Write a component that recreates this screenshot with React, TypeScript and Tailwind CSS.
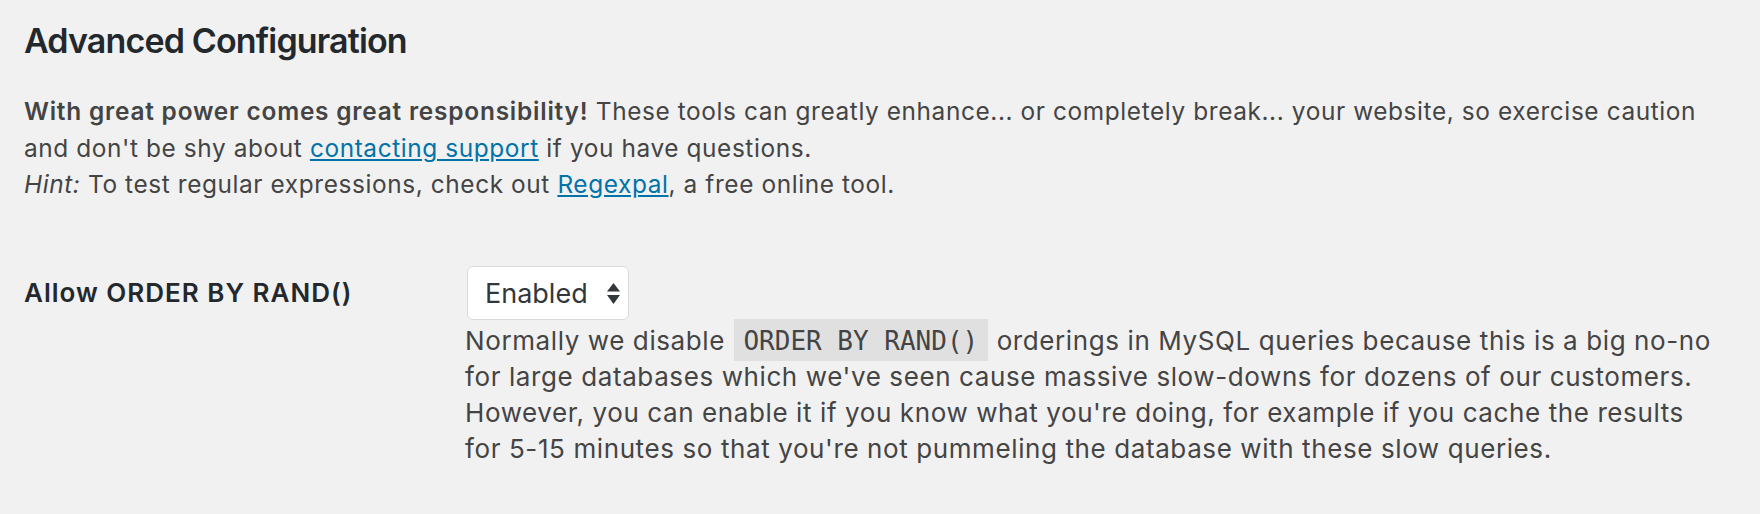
import React from "react"

const sans = "font-['Inter','Noto_Sans',sans-serif]"

function SelectArrows() {
  return (
    <svg width="13" height="21" viewBox="0 0 13 21" className="shrink-0">
      <path d="M0 8.5 L6.5 0 L13 8.5 Z" fill="#32373c" />
      <path d="M0 12 L6.5 21 L13 12 Z" fill="#32373c" />
    </svg>
  )
}

function FakeSelect({ value }: { value: string }) {
  return (
    <div className="ml-[2px] inline-flex h-[54px] w-[162px] items-center justify-between rounded-[6px] border border-[#dadada] bg-white pl-[17px] pr-[8px]">
      <span className="text-[27px] leading-none text-[#32373c]">{value}</span>
      <SelectArrows />
    </div>
  )
}

export default function App() {
  return (
    <div className={`${sans} h-[514px] w-full bg-[#f1f1f1] pl-[24px] pt-[19px] text-[#444]`}>
      <h2 className="text-[34px] font-semibold leading-[1.3] tracking-[-0.85px] text-[#23282d]">
        Advanced Configuration
      </h2>

      {/* intro */}
      <p className="mt-[30px] whitespace-nowrap text-[24.4px] leading-[1.5] tracking-[0.6px]">
        <strong className="font-semibold tracking-[0.8px]">With great power comes great responsibility!</strong>{" "}
        These tools can greatly enhance... or completely break... your website, so exercise caution
        <br />
        and don't be shy about{" "}
        <a href="#" className="text-[#0073aa] underline underline-offset-[2px]">contacting support</a>{" "}
        if you have questions.
        <br />
        <em>Hint:</em> To test regular expressions, check out{" "}
        <a href="#" className="text-[#0073aa] underline underline-offset-[2px]">Regexpal</a>, a free online tool.
      </p>

      <div className="mt-[63px] flex">
        <div className="w-[441px] shrink-0 pt-[10px] text-[26px] font-semibold leading-[1.3] tracking-[1px] text-[#23282d]">
          Allow ORDER BY RAND()
        </div>
        <div className="flex flex-col items-start">
          <FakeSelect value="Enabled" />
          <p className="mt-[3px] whitespace-nowrap text-[26px] leading-[36px] tracking-[0.6px]">
            Normally we disable{" "}
            <code className="mx-px bg-[#e0e0e0] px-[9.5px] pt-[7px] pb-[5px] font-['DejaVu_Sans_Mono',monospace] text-[26px] tracking-normal text-[#444]">
              ORDER BY RAND()
            </code>{" "}
            orderings in MySQL queries because this is a big no-no
            <br />
            for large databases which we've seen cause massive slow-downs for dozens of our customers.
            <br />
            However, you can enable it if you know what you're doing, for example if you cache the results
            <br />
            for 5-15 minutes so that you're not pummeling the database with these slow queries.
          </p>
        </div>
      </div>
    </div>
  )
}
